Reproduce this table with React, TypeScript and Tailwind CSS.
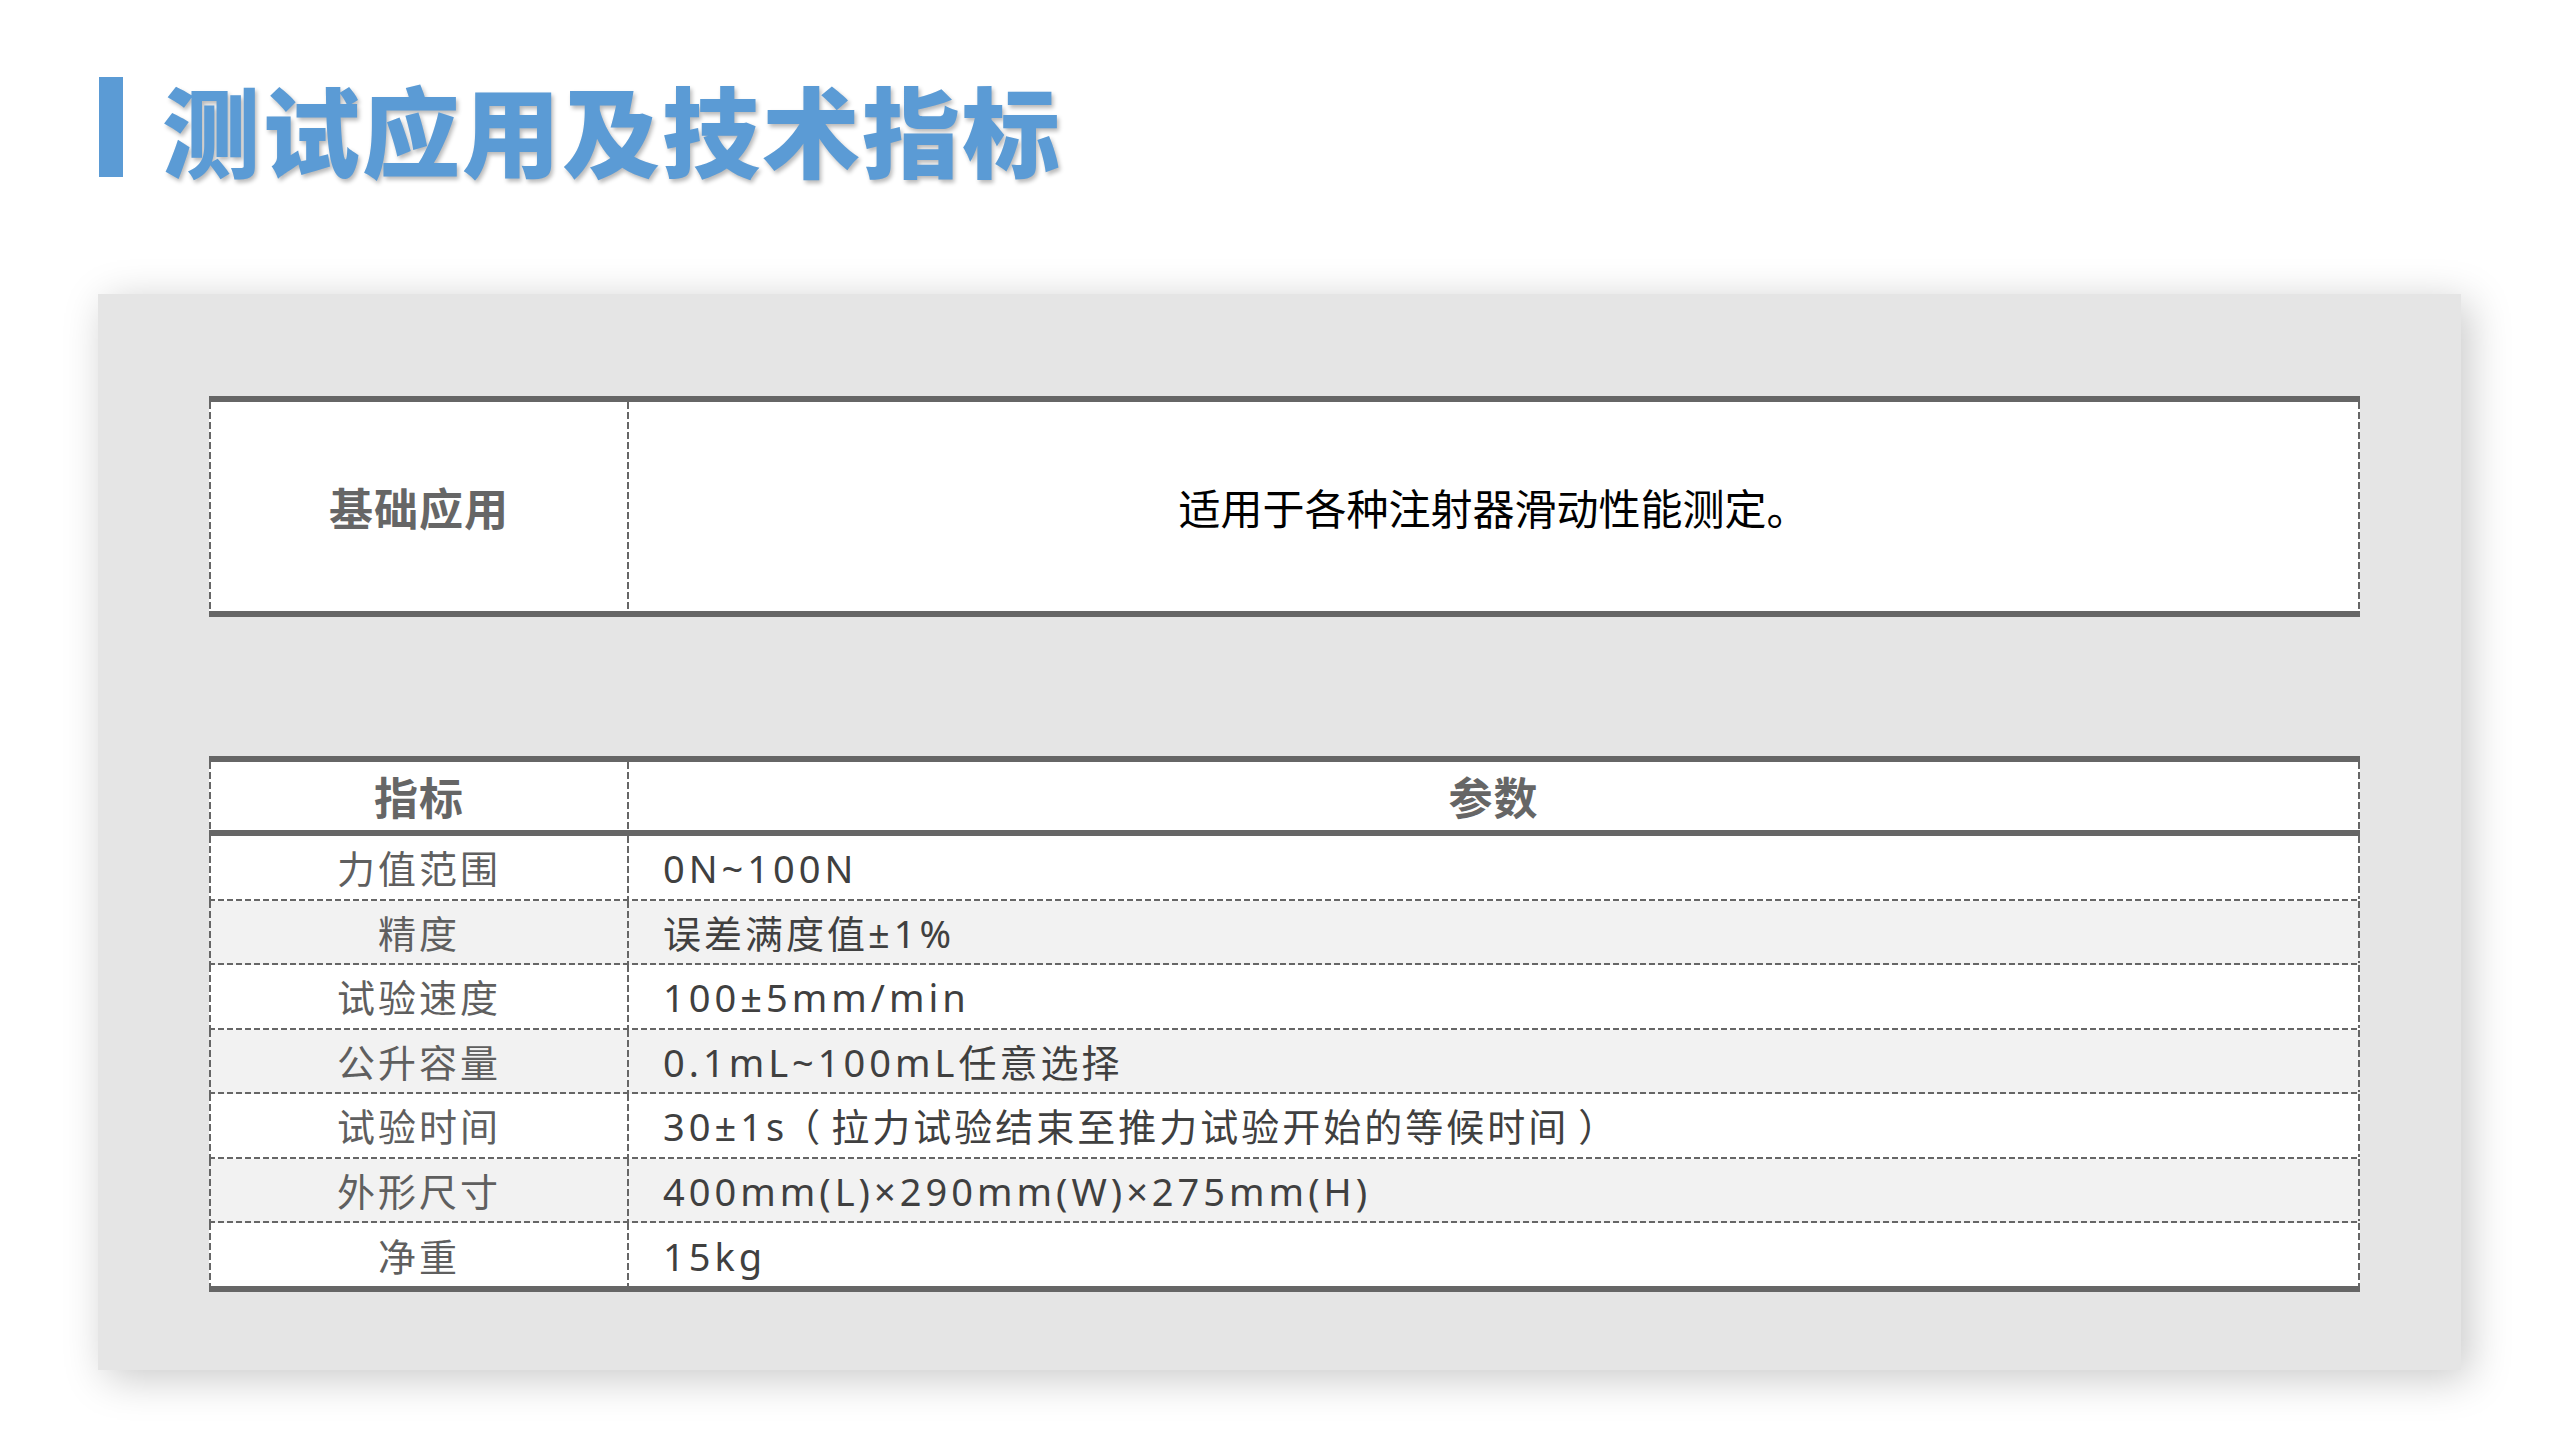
import React from "react";

const rows: [string, string][] = [
  ["力值范围", "0N~100N"],
  ["精度", "误差满度值±1%"],
  ["试验速度", "100±5mm/min"],
  ["公升容量", "0.1mL~100mL任意选择"],
  ["试验时间", "30±1s（拉力试验结束至推力试验开始的等候时间）"],
  ["外形尺寸", "400mm(L)×290mm(W)×275mm(H)"],
  ["净重", "15kg"],
];

function Mixed({ text }: { text: string }) {
  const parts = text.split(/([\u0000-\u024f]+|（|）)/).filter(Boolean);
  return (
    <>
      {parts.map((p, i) => {
        if (p === "（")
          return (
            <span key={i} className="[font-feature-settings:'halt'] ml-[13px] mr-[8px]">
              {p}
            </span>
          );
        if (p === "）")
          return (
            <span key={i} className="[font-feature-settings:'halt'] ml-[9px]">
              {p}
            </span>
          );
        return /^[\u0000-\u024f]+$/.test(p) ? (
          <span key={i} className="tracking-[4px]">
            {p}
          </span>
        ) : (
          <span key={i}>{p}</span>
        );
      })}
    </>
  );
}

function HBar() {
  return <div className="h-[6px] w-full bg-[#666666]" />;
}

function HDash() {
  return (
    <div className="h-[2px] w-full bg-[repeating-linear-gradient(90deg,#666666_0_6px,transparent_6px_9px)]" />
  );
}

function VDash() {
  return (
    <div className="w-[2px] self-stretch shrink-0 bg-[repeating-linear-gradient(180deg,#666666_0_7px,transparent_7px_10px)]" />
  );
}

export default function App() {
  return (
    <div className="w-[2560px] h-[1440px] bg-white overflow-hidden font-['Noto_Sans','Noto_Sans_CJK_SC',sans-serif]">
      {/* Title */}
      <div className="flex items-center pl-[99px] pt-[77px] gap-[39px]">
        <div className="w-[24px] h-[100px] bg-[#5b9bd5] shrink-0" />
        <h1 className="text-[98px] leading-none font-black tracking-[2px] text-[#5b9bd5] font-['Noto_Sans_CJK_SC',sans-serif] [text-shadow:2px_3px_4px_rgba(0,0,0,0.28)]">
          测试应用及技术指标
        </h1>
      </div>

      {/* Card */}
      <div className="mt-[117px] ml-[98px] w-[2363px] h-[1076px] bg-[#e5e5e5] shadow-[8px_8px_40px_rgba(0,0,0,0.22)] pt-[102px] pl-[111px]">
        {/* Table 1 */}
        <div className="w-[2151px] flex flex-col">
          <HBar />
          <div className="flex h-[209px] bg-white">
            <VDash />
            <div className="w-[416px] flex items-center justify-center text-[44px] font-bold tracking-[1px] text-[#666666] font-['Noto_Sans_CJK_SC',sans-serif]">
              基础应用
            </div>
            <VDash />
            <div className="flex-1 flex items-center justify-center text-[42px] text-black font-['Noto_Sans_CJK_SC',sans-serif]">
              适用于各种注射器滑动性能测定。
            </div>
            <VDash />
          </div>
          <HBar />
        </div>

        {/* Table 2 */}
        <div className="w-[2151px] flex flex-col mt-[139px]">
          <HBar />
          <div className="flex h-[68px] bg-white">
            <VDash />
            <div className="w-[416px] flex items-center justify-center text-[44px] font-bold tracking-[1px] text-[#666666] font-['Noto_Sans_CJK_SC',sans-serif]">
              指标
            </div>
            <VDash />
            <div className="flex-1 flex items-center justify-center text-[44px] font-bold tracking-[1px] text-[#666666] font-['Noto_Sans_CJK_SC',sans-serif]">
              参数
            </div>
            <VDash />
          </div>
          <HBar />
          {rows.map(([label, value], i) => (
            <div key={label} className="flex flex-col">
              <div
                className={`flex ${i === rows.length - 1 ? "h-[63px]" : "h-[62.5px]"} ${
                  i % 2 === 1 ? "bg-[#f2f2f2]" : "bg-white"
                }`}
              >
                <VDash />
                <div className="w-[416px] flex items-center justify-center pt-[3px] text-[38px] tracking-[3px] text-[#5f5f5f]">
                  {label}
                </div>
                <VDash />
                <div className="flex-1 flex items-center pl-[34px] pt-[3px] text-[38px] tracking-[3px] text-[#404040] whitespace-nowrap">
                  <Mixed text={value} />
                </div>
                <VDash />
              </div>
              {i < rows.length - 1 && (
                <div className={i % 2 === 1 ? "bg-[#f2f2f2]" : "bg-white"}>
                  <HDash />
                </div>
              )}
            </div>
          ))}
          <HBar />
        </div>
      </div>
    </div>
  );
}
